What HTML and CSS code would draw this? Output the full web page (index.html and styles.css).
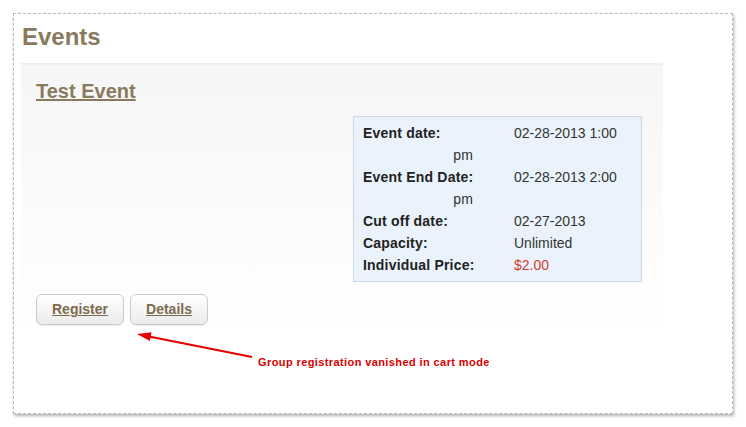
FILE: index.html
```html
<!DOCTYPE html>
<html>
<head>
    <meta charset="UTF-8">
    <meta name="viewport" content="width=device-width, initial-scale=1.0">
    <title>Events</title>
    <link rel="stylesheet" href="styles.css">
</head>
<body>
    <div class="sheet">
        <h1>Events</h1>
        <div class="event">
            <h2><a href="#">Test Event</a></h2>
            <div class="details-row">
                <div class="info-box">
                    <span class="label">Event date:</span><span class="value">02-28-2013 1:00</span>
                    <span class="label wrap">pm</span><span class="value"></span>
                    <span class="label">Event End Date:</span><span class="value">02-28-2013 2:00</span>
                    <span class="label wrap">pm</span><span class="value"></span>
                    <span class="label">Cut off date:</span><span class="value">02-27-2013</span>
                    <span class="label">Capacity:</span><span class="value">Unlimited</span>
                    <span class="label">Individual Price:</span><span class="value price">$2.00</span>
                </div>
            </div>
            <div class="button-container">
                <a class="btn" href="#">Register</a>
                <a class="btn" href="#">Details</a>
            </div>
        </div>
    </div>

    <!-- annotation drawn over the screenshot -->
    <svg class="arrow" width="746" height="427" viewBox="0 0 746 427">
        <line x1="252" y1="357" x2="149" y2="336.5" stroke="#e60000" stroke-width="2"/>
        <polygon points="137,334 151.5,332.3 149.9,341" fill="#e60000"/>
    </svg>
    <div class="note">Group registration vanished in cart mode</div>
</body>
</html>
```

FILE: styles.css
```css
body {
    margin: 0;
    padding: 0;
    background-color: #ffffff;
    font-family: "Liberation Sans", Arial, sans-serif;
    position: relative;
    width: 746px;
    height: 427px;
    overflow: hidden;
}

.sheet {
    margin: 13px;
    width: 711px;
    height: 390px;
    padding: 9px 0 0 7px;
    border: 1px dashed #b9b9b9;
    box-shadow: 1px 2px 3px rgba(0, 0, 0, 0.3);
    background-color: #ffffff;
}

h1 {
    margin: 0 0 12px 1px;
    font-size: 24px;
    line-height: 28px;
    color: #8a7a5d;
}

.event {
    width: 606px;
    padding: 15px 21px 20px 15px;
    border-top: 2px solid #eeeeee;
    background: linear-gradient(#f6f6f6, #ffffff 260px);
}

h2 {
    margin: 0 0 13px 0;
    font-size: 20px;
    line-height: 23px;
}

h2 a {
    color: #8a7a5d;
}

.details-row {
    display: flex;
    justify-content: flex-end;
}

.info-box {
    width: 269px;
    padding: 5px 9px;
    background-color: #eaf3fb;
    border: 1px solid #c9d9e8;
    display: grid;
    grid-template-columns: 151px auto;
    font-size: 14px;
    line-height: 22px;
    color: #333333;
}

.label {
    font-weight: bold;
    color: #222222;
    letter-spacing: 0.2px;
}

.label.wrap {
    width: 110px;
    text-align: right;
    font-weight: normal;
    color: #333333;
}

.value.price {
    color: #d33b2f;
}

.button-container {
    display: flex;
    gap: 6px;
    margin-top: 12px;
}

.btn {
    display: block;
    height: 29px;
    line-height: 29px;
    padding: 0 15px;
    font-size: 14px;
    font-weight: bold;
    color: #7d6c4e;
    border: 1px solid #cccccc;
    border-radius: 6px;
    background: linear-gradient(#ffffff, #ebebeb);
    box-shadow: 0 1px 1px rgba(0, 0, 0, 0.08);
}

.arrow {
    position: absolute;
    left: 0;
    top: 0;
}

.note {
    position: absolute;
    left: 258px;
    top: 356px;
    font-size: 11px;
    line-height: 13px;
    font-weight: bold;
    letter-spacing: 0.4px;
    color: #d80000;
}
```
